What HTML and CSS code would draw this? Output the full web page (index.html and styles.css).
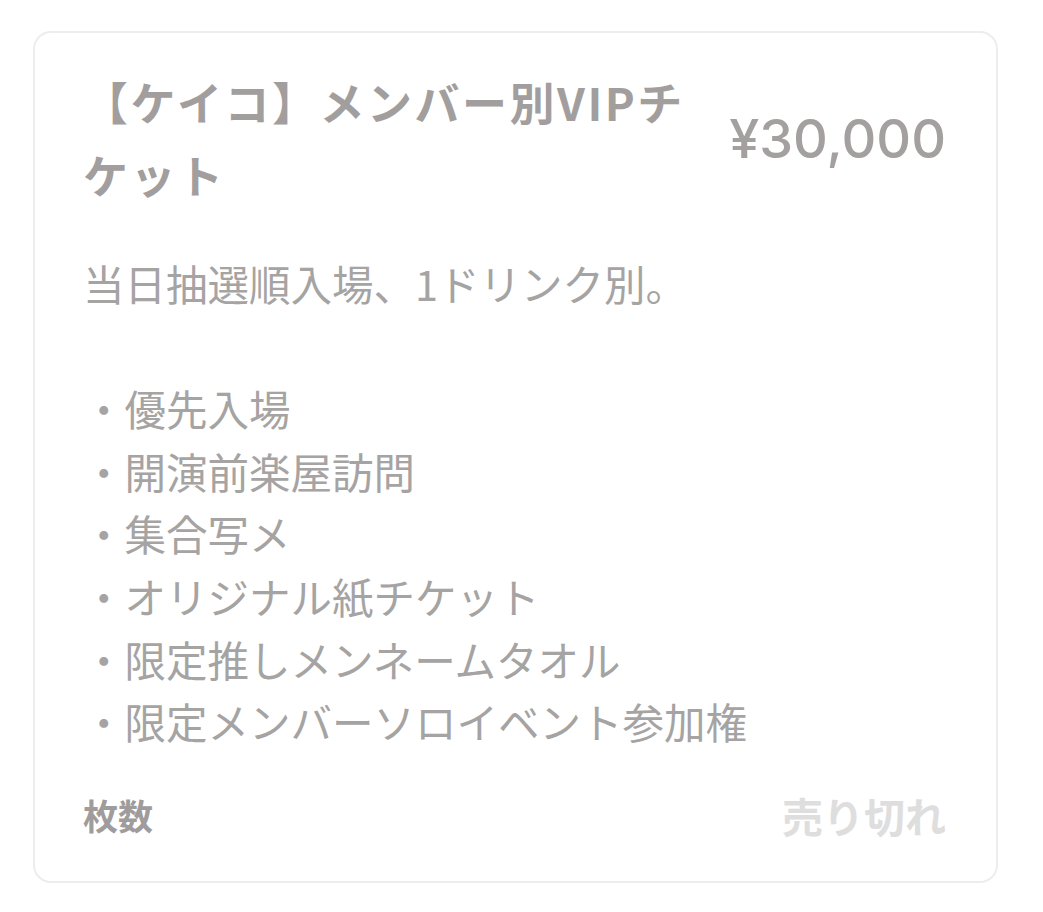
FILE: index.html
```html
<!DOCTYPE html>
<html lang="ja">
<head>
<meta charset="utf-8">
<title>チケット</title>
<link rel="stylesheet" href="styles.css">
</head>
<body>
<div class="card">
  <div class="head">
    <div class="title">【ケイコ】メンバー別VIPチケット</div>
    <div class="price">¥30,000</div>
  </div>
  <p class="desc">当日抽選順入場、1ドリンク別。<br><br>・優先入場<br>・開演前楽屋訪問<br>・集合写メ<br>・オリジナル紙チケット<br>・限定推しメンネームタオル<br>・限定メンバーソロイベント参加権</p>
  <div class="foot">
    <span class="qty">枚数</span>
    <span class="soldout">売り切れ</span>
  </div>
</div>
</body>
</html>
```

FILE: styles.css
```css
html, body {
  margin: 0;
  background: #ffffff;
}
body {
  padding: 31px 47px 0 33px;
  font-family: "Noto Sans CJK JP", "Noto Sans", sans-serif;
  color: #a29e9e;
}
.card {
  border: 2px solid #ededed;
  border-radius: 18px;
  padding: 32px 50px 36px 48px;
  width: 863px;
}
.head {
  display: flex;
  align-items: center;
  gap: 12px;
}
.title {
  flex: 1;
  font-size: 45px;
  font-weight: 700;
  line-height: 73px;
  letter-spacing: 2.5px;
}
.price {
  font-family: "Inter", "Liberation Sans", sans-serif;
  font-size: 54px;
  font-weight: 500;
  color: #a4a0a0;
  white-space: nowrap;
}
.desc {
  margin: 41px 0 0 0;
  font-size: 41.5px;
  line-height: 62.6px;
  color: #a6a3a3;
}
.foot {
  display: flex;
  justify-content: space-between;
  align-items: center;
  height: 60px;
  margin-top: 32px;
}
.qty {
  font-size: 35px;
  font-weight: 700;
  color: #a09c9c;
}
.soldout {
  font-size: 41px;
  font-weight: 700;
  color: #dedede;
}
```
